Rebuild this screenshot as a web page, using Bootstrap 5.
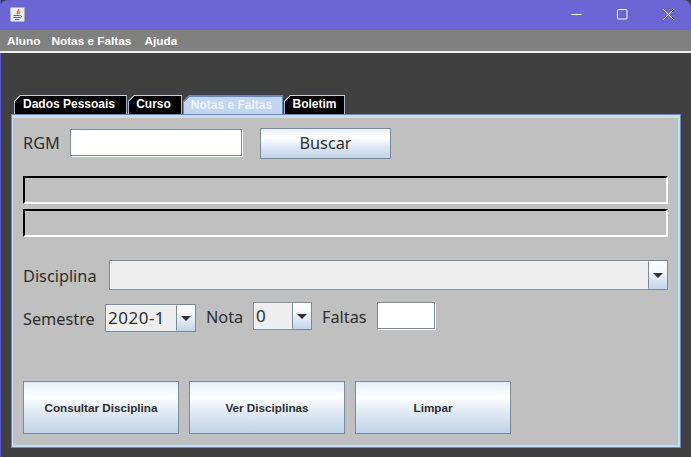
<!DOCTYPE html>
<html lang="pt">
<head>
    <meta charset="UTF-8">
    <meta name="viewport" content="width=device-width, initial-scale=1.0">
    <title>Notas e Faltas</title>
    <link href="https://cdn.jsdelivr.net/npm/bootstrap@5.3.0/dist/css/bootstrap.min.css" rel="stylesheet">
    <style>
        html, body { height: 100%; }
        body { background: #404040; font-family: "Liberation Sans", Arial, sans-serif; overflow: hidden; }
        .app-window { width: 691px; height: 457px; border-left: 1px solid #5a56c8; }
        .title-bar { height: 30px; background: #6a67d4; margin-left: -1px; padding-left: 10px; padding-top: 7px; border-radius: 8px 8px 0 0; }
        .win-btns { margin-left: auto; margin-top: -8px; }
        .win-btn { width: 46px; height: 30px; }
        .menu-bar { height: 23px; background: #808080; border-bottom: 2px solid #eeeeee; padding-left: 7px; gap: 13px; margin-left: -1px; padding-top: 3px; }
        .menu-bar span { color: #fff; font-size: 11.8px; font-weight: 700; line-height: 16px; }
        .menu-bar .menu-first { margin-right: -2px; }
        .desk { padding: 42px 10px 0 10px; }
        .tab-row { padding-left: 3px; gap: 1px; height: 19px; }
        .tab-item { height: 19px; background: linear-gradient(135deg, #c8d4e4 4px, #000 4px); color: #fff; font-size: 12px; font-weight: 700; line-height: 17px; text-align: center; padding-right: 3px; border-top: 1px solid #c8d4e4; border-right: 1px solid #a9b8cc; border-left: 1px solid #a9b8cc; clip-path: polygon(6px 0, 100% 0, 100% 100%, 0 100%, 0 6px); }
        .tab-sel { background: linear-gradient(135deg, #6a87c0 4px, #c2d6f0 4px); color: #eef3fb; border: 0; border-top: 2px solid #6a87c0; border-left: 1px solid #6a87c0; border-right: 1px solid #6a87c0; line-height: 16px; }
        .tab-dados { width: 113px; }
        .tab-curso { width: 54px; }
        .tab-notas { width: 100px; }
        .tab-boletim { width: 61px; padding-right: 0; }
        .tab-pane-box { width: 670px; height: 334px; background: #c0c0c0; border-style: solid; border-color: #c8dcf4; border-width: 4px 3px 3px 2px; outline: 1px solid #6f8bb5; outline-offset: -1px; padding: 10px 10px 0 10px; }
        .lbl { color: #2e2e2e; font-family: "Noto Sans", sans-serif; font-size: 16.3px; line-height: 22px; }
        .lbl-rgm { width: 47px; }
        .lbl-disc { width: 86px; padding-top: 1px; }
        .lbl-sem { width: 82px; margin-top: 6px; }
        .lbl-nota { width: 57px; padding-left: 10px; margin-top: 4px; }
        .lbl-faltas { width: 65px; padding-left: 10px; margin-top: 4px; }
        .txt-field { background: #fff; border: 1px solid #7a8a9c; border-right-color: #fff; border-bottom-color: #fff; box-shadow: inset -1px -1px 0 #7a8a9c; height: 28px; }
        .field-rgm { width: 173px; margin-top: 1px; }
        .field-faltas { width: 59px; }
        .metal-btn { background: linear-gradient(#e6eef8 0%, #ffffff 30%, #dfe9f5 60%, #c0d3e8 100%); border: 1px solid #7a8a9c; color: #2e2e2e; padding: 0; border-radius: 0; }
        .btn-buscar { width: 131px; height: 31px; font-family: "Noto Sans", sans-serif; font-size: 16.3px; margin-left: 17px; }
        .btn-big { width: 156px; height: 53px; font-size: 11.7px; font-weight: 700; }
        .bar-field { width: 645px; height: 28px; border: 2px solid #fff; border-top-color: #000; border-left-color: #000; }
        .bar-first { margin-top: 17px; }
        .bar-second { margin-top: 5px; }
        .row-disc { margin-top: 23px; }
        .row-nota { margin-top: 12px; }
        .row-btns { gap: 10px; margin-top: 49px; }
        .combo { height: 28px; border: 1px solid #7a8a9c; background: #eeeeee; }
        .combo-disc { width: 559px; height: 30px; }
        .combo-sem { width: 91px; margin-top: 2px; }
        .combo-nota { width: 59px; }
        .combo-val { flex: 1; color: #2e2e2e; font-family: "Noto Sans", sans-serif; font-size: 17px; letter-spacing: .5px; line-height: 24px; padding-left: 1px; border: 1px solid #f4f4f4; border-right: 1px solid #7a8a9c; }
        .combo-arrow { width: 18px; background: linear-gradient(#ffffff 0%, #f4f7fb 35%, #c3d5e9 100%); }
        .combo-arrow svg { display: block; }
    </style>
</head>
<body>

<div class="app-window">
    <!-- Title bar -->
    <div class="title-bar d-flex">
        <svg width="15" height="15" viewBox="0 0 15 15">
            <rect x="0.5" y="0.5" width="14" height="14" rx="1" fill="#eceef4" stroke="#a8b0cc"/>
            <path d="M8.500 2c1 2-2.500 3-1 5.500M10 4.500c-1.200 .8-1.200 1.800-.8 3" fill="none" stroke="#e2611c" stroke-width="1.300"/>
            <path d="M3.500 8.500h6M3.500 10.500h6.500M5 12.500h4.500M10 8.500c2 0 2 2 0 2.300" fill="none" stroke="#4c6a92" stroke-width="1"/>
        </svg>
        <div class="win-btns d-flex">
            <div class="win-btn d-flex align-items-center justify-content-center">
                <svg width="11" height="11" viewBox="0 0 11 11"><path d="M0.500 5.500h10" stroke="#fff" fill="none"/></svg>
            </div>
            <div class="win-btn d-flex align-items-center justify-content-center">
                <svg width="11" height="11" viewBox="0 0 11 11"><rect x="0.500" y="0.500" width="9.500" height="9.500" rx="1" stroke="#fff" fill="none"/></svg>
            </div>
            <div class="win-btn d-flex align-items-center justify-content-center">
                <svg width="11" height="11" viewBox="0 0 11 11"><path d="M0.500 0.500l10 10M10.500 0.500l-10 10" stroke="#fff" fill="none"/></svg>
            </div>
        </div>
    </div>

    <!-- Menu -->
    <div class="menu-bar d-flex">
        <span class="menu-first">Aluno</span>
        <span>Notas e Faltas</span>
        <span>Ajuda</span>
    </div>

    <div class="desk">
        <!-- Tabs -->
        <div class="tab-row d-flex">
            <div class="tab-item tab-dados">Dados Pessoais</div>
            <div class="tab-item tab-curso">Curso</div>
            <div class="tab-item tab-sel tab-notas">Notas e Faltas</div>
            <div class="tab-item tab-boletim">Boletim</div>
        </div>

        <div class="tab-pane-box">
            <div class="d-flex align-items-start">
                <span class="lbl lbl-rgm mt-1">RGM</span>
                <div class="txt-field field-rgm"></div>
                <button type="button" class="btn metal-btn btn-buscar">Buscar</button>
            </div>

            <div class="bar-field bar-first"></div>
            <div class="bar-field bar-second"></div>

            <div class="d-flex align-items-center row-disc">
                <span class="lbl lbl-disc">Disciplina</span>
                <div class="combo combo-disc d-flex">
                    <div class="combo-val"></div>
                    <div class="combo-arrow d-flex align-items-center justify-content-center">
                        <svg width="10" height="5" viewBox="0 0 10 5"><path d="M0 0h10L5 5z" fill="#333"/></svg>
                    </div>
                </div>
            </div>

            <div class="d-flex align-items-start row-nota">
                <span class="lbl lbl-sem">Semestre</span>
                <div class="combo combo-sem d-flex">
                    <div class="combo-val">2020-1</div>
                    <div class="combo-arrow d-flex align-items-center justify-content-center">
                        <svg width="10" height="5" viewBox="0 0 10 5"><path d="M0 0h10L5 5z" fill="#333"/></svg>
                    </div>
                </div>
                <span class="lbl lbl-nota">Nota</span>
                <div class="combo combo-nota d-flex">
                    <div class="combo-val">0</div>
                    <div class="combo-arrow d-flex align-items-center justify-content-center">
                        <svg width="10" height="5" viewBox="0 0 10 5"><path d="M0 0h10L5 5z" fill="#333"/></svg>
                    </div>
                </div>
                <span class="lbl lbl-faltas">Faltas</span>
                <div class="txt-field field-faltas"></div>
            </div>

            <div class="d-flex row-btns">
                <button type="button" class="btn metal-btn btn-big">Consultar Disciplina</button>
                <button type="button" class="btn metal-btn btn-big">Ver Disciplinas</button>
                <button type="button" class="btn metal-btn btn-big">Limpar</button>
            </div>
        </div>
    </div>
</div>

<script src="https://cdn.jsdelivr.net/npm/bootstrap@5.3.0/dist/js/bootstrap.bundle.min.js"></script>
</body>
</html>
